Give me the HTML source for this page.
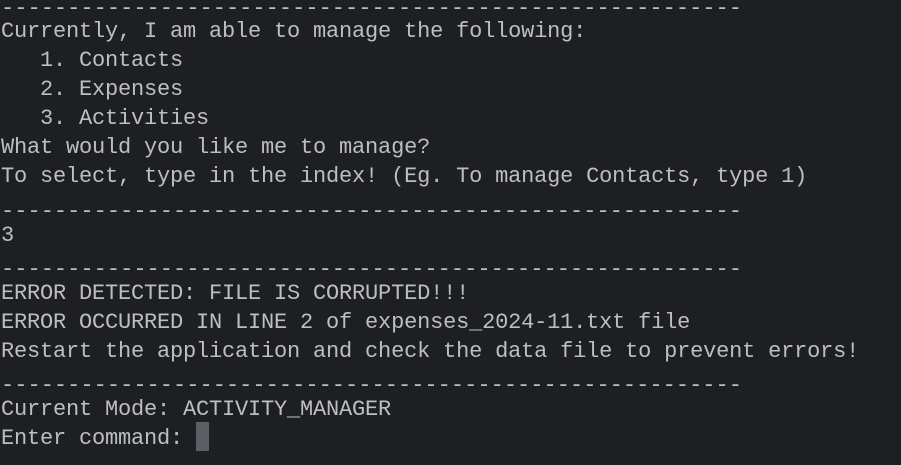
<!DOCTYPE html>
<html><head><meta charset="utf-8"><style>
html,body{margin:0;padding:0;background:#1e1f22;width:901px;height:465px;overflow:hidden}
.l{position:absolute;left:1px;font-family:"Liberation Mono",monospace;font-size:22px;line-height:29px;color:#bcbec4;white-space:pre;letter-spacing:-0.2px}
.d{letter-spacing:0.03px}
.cur{position:absolute;left:196px;top:422px;width:13px;height:29px;background:#5d5f66}
</style></head><body>
<div class="l d" style="top:-6px">--------------------------------------------------------</div>
<div class="l" style="top:17px">Currently, I am able to manage the following:</div>
<div class="l" style="top:46px">   1. Contacts</div>
<div class="l" style="top:75px">   2. Expenses</div>
<div class="l" style="top:104px">   3. Activities</div>
<div class="l" style="top:133px">What would you like me to manage?</div>
<div class="l" style="top:162px">To select, type in the index! (Eg. To manage Contacts, type 1)</div>
<div class="l d" style="top:197px">--------------------------------------------------------</div>
<div class="l" style="top:221px">3</div>
<div class="l d" style="top:255px">--------------------------------------------------------</div>
<div class="l" style="top:279px">ERROR DETECTED: FILE IS CORRUPTED!!!</div>
<div class="l" style="top:308px">ERROR OCCURRED IN LINE 2 of expenses_2024-11.txt file</div>
<div class="l" style="top:337px">Restart the application and check the data file to prevent errors!</div>
<div class="l d" style="top:371px">--------------------------------------------------------</div>
<div class="l" style="top:395px">Current Mode: ACTIVITY_MANAGER</div>
<div class="l" style="top:424px">Enter command: </div>
<div class="cur"></div>
</body></html>
